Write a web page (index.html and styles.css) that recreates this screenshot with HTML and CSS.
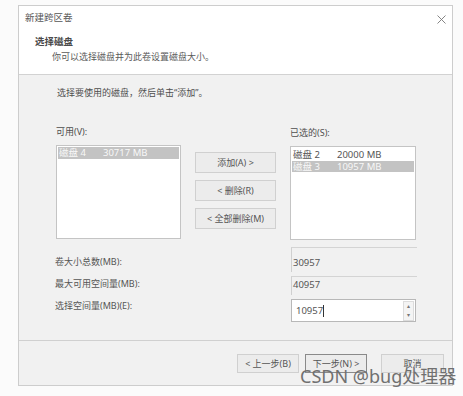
FILE: index.html
```html
<!DOCTYPE html>
<html lang="zh-CN">
<head>
    <meta charset="UTF-8">
    <title>新建跨区卷</title>
    <link rel="stylesheet" href="styles.css">
</head>
<body>

<div class="dialog">
    <div class="header">
        <div class="titlebar">
            <span class="title">新建跨区卷</span>
            <svg class="close" width="9" height="9" viewBox="0 0 9 9">
                <path d="M0.5 0.5 L8.5 8.5 M8.5 0.5 L0.5 8.5" stroke="#777" stroke-width="0.9" fill="none"/>
            </svg>
        </div>
        <div class="step-title">选择磁盘</div>
        <div class="step-desc">你可以选择磁盘并为此卷设置磁盘大小。</div>
    </div>

    <div class="content">
        <p class="hint">选择要使用的磁盘，然后单击“添加”。</p>

        <div class="lists">
            <div class="list-col">
                <div class="list-label">可用(V):</div>
                <div class="listbox">
                    <div class="item selected"><span class="disk">磁盘 4</span><span>30717 MB</span></div>
                </div>
            </div>

            <div class="move-buttons">
                <button class="btn">添加(A) &gt;</button>
                <button class="btn">&lt; 删除(R)</button>
                <button class="btn">&lt; 全部删除(M)</button>
            </div>

            <div class="list-col right">
                <div class="list-label">已选的(S):</div>
                <div class="listbox">
                    <div class="item"><span class="disk">磁盘 2</span><span>20000 MB</span></div>
                    <div class="item selected"><span class="disk">磁盘 3</span><span>10957 MB</span></div>
                </div>
            </div>
        </div>

        <div class="fields">
            <div class="field-row first">
                <span class="field-label">卷大小总数(MB):</span>
                <span class="readonly">30957</span>
            </div>
            <div class="field-row second">
                <span class="field-label">最大可用空间量(MB):</span>
                <span class="readonly">40957</span>
            </div>
            <div class="field-row third">
                <span class="field-label">选择空间量(MB)(E):</span>
                <div class="spinbox">
                    <span class="spin-value">10957<span class="caret"></span></span>
                    <div class="spin-arrows">
                        <span class="arrow">&#9652;</span>
                        <span class="arrow">&#9662;</span>
                    </div>
                </div>
            </div>
        </div>
    </div>

    <div class="footer">
        <button class="btn foot">&lt; 上一步(B)</button>
        <button class="btn foot default">下一步(N) &gt;</button>
        <button class="btn foot cancel">取消</button>
    </div>
</div>

<div class="watermark">CSDN @bug处理器</div>

</body>
</html>
```

FILE: styles.css
```css
body {
    margin: 0;
    background-color: #fbfbfb;
    font-family: "Noto Sans", "Noto Sans CJK SC", sans-serif;
    color: #4e4e4e;
    font-size: 9px;
}
.dialog {
    box-sizing: border-box;
    width: 435px;
    height: 381px;
    margin: 5px 0 0 18px;
    border: 1px solid #cdcdcd;
    background-color: #f1f1f1;
    display: flex;
    flex-direction: column;
}
.header {
    box-sizing: border-box;
    height: 69px;
    background-color: #ffffff;
    border-bottom: 1px solid #d2d2d2;
}
.titlebar {
    display: flex;
    justify-content: space-between;
    align-items: center;
    height: 14px;
    padding: 5px 6px 0 6px;
}
.title {
    font-size: 9.5px;
    line-height: 14px;
    color: #555;
}
.close {
    margin-top: 2px;
}
.step-title {
    margin-top: 10px;
    padding-left: 16px;
    font-size: 9.5px;
    line-height: 14px;
    font-weight: bold;
    color: #4a4a4a;
}
.step-desc {
    margin-top: 1px;
    padding-left: 33px;
    line-height: 14px;
    color: #5a5a5a;
}
.content {
    padding: 11px 0 0 37px;
}
.hint {
    margin: 0;
    padding-left: 1px;
    line-height: 14px;
}
.lists {
    display: flex;
    margin-top: 25px;
}
.list-col {
    display: flex;
    flex-direction: column;
}
.list-label {
    line-height: 14px;
    margin-bottom: 6px;
}
.list-col.right .list-label {
    margin-top: 1px;
}
.listbox {
    box-sizing: border-box;
    width: 125px;
    height: 94px;
    border: 1px solid #c4c4c4;
    background-color: #ffffff;
    padding: 1px;
}
.list-col.right .listbox {
    width: 126px;
    padding-top: 2px;
}
.item {
    display: flex;
    height: 11.5px;
    line-height: 11.5px;
    font-size: 9.5px;
    color: #555;
    padding-left: 1px;
}
.item.selected {
    background-color: #c3c3c3;
    color: #f8f8f8;
}
.disk {
    width: 44px;
}
.move-buttons {
    display: flex;
    flex-direction: column;
    gap: 7px;
    margin: 27px 14px 0 14px;
}
.btn {
    box-sizing: border-box;
    width: 81px;
    height: 21px;
    border: 1px solid #d0d0d0;
    background-color: #ececec;
    color: #555;
    font-family: "Noto Sans", "Noto Sans CJK SC", sans-serif;
    font-size: 9px;
    padding: 0;
}
.fields {
    margin-top: 7px;
}
.field-row {
    display: flex;
    align-items: flex-start;
    box-sizing: border-box;
}
.field-label {
    width: 236px;
    line-height: 14px;
    margin-left: -1px;
    color: #555;
}
.field-row.first {
    height: 29px;
    padding-top: 8px;
}
.field-row.first .readonly {
    margin-top: -8px;
    padding-top: 8px;
    height: 16px;
}
.field-row.second {
    height: 23px;
    padding-top: 1px;
}
.field-row.second .readonly {
    margin-top: -1px;
    padding-top: 1px;
    height: 17px;
}
.readonly {
    box-sizing: content-box;
    width: 124px;
    border-top: 1px solid #d4d4d4;
    border-left: 1px solid #d0d0d0;
    line-height: 14px;
    font-size: 9.5px;
    color: #555;
    padding-left: 1px;
}
.spinbox {
    box-sizing: border-box;
    width: 125px;
    height: 23px;
    border: 1px solid #b8b8b8;
    background-color: #ffffff;
    display: flex;
    justify-content: space-between;
    align-items: center;
}
.spin-value {
    font-size: 9.5px;
    padding-left: 4px;
    color: #555;
    display: flex;
    align-items: center;
}
.caret {
    display: inline-block;
    width: 1px;
    height: 12px;
    background-color: #333;
}
.spin-arrows {
    display: flex;
    flex-direction: column;
    margin-right: 1px;
    border: 1px solid #dcdcdc;
}
.arrow {
    width: 9px;
    height: 9px;
    line-height: 9px;
    font-size: 6px;
    text-align: center;
    color: #777;
    background-color: #f4f4f4;
}
.footer {
    margin-top: auto;
    height: 45px;
    box-sizing: border-box;
    border-top: 1px solid #d0d0d0;
    display: flex;
    justify-content: flex-end;
    align-items: flex-start;
    padding: 13px 8px 0 0;
}
.btn.foot {
    width: 62px;
    height: 19px;
}
.btn.default {
    margin-left: 6px;
    border-color: #8a8a8a;
}
.btn.cancel {
    margin-left: 14px;
    width: 63px;
}
.watermark {
    position: absolute;
    left: 300px;
    top: 365px;
    font-family: "Noto Sans", "Noto Sans CJK SC", sans-serif;
    font-size: 18px;
    line-height: 22px;
    color: #707070;
}
```
